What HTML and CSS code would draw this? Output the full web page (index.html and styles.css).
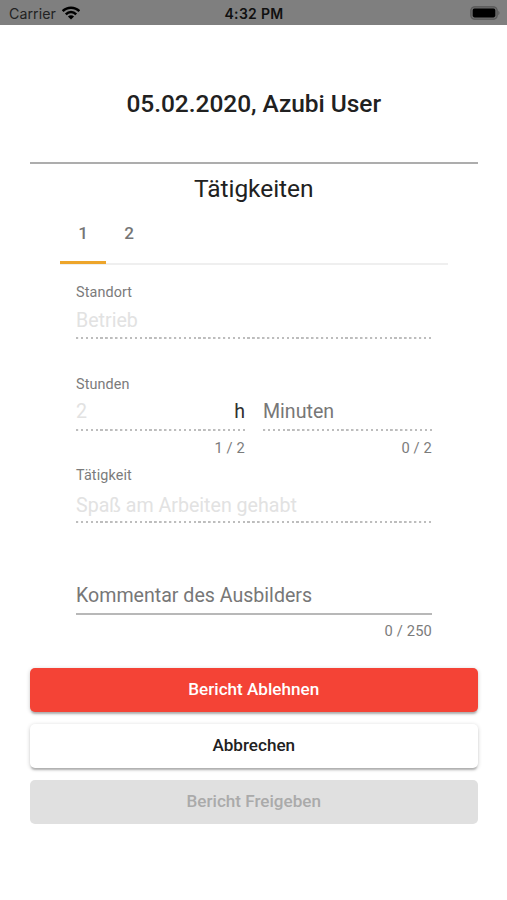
FILE: index.html
```html
<!DOCTYPE html>
<html lang="de">
<head>
<meta charset="utf-8">
<meta name="viewport" content="width=device-width, initial-scale=1">
<title>Bericht</title>
<link rel="stylesheet" href="styles.css">
</head>
<body>
<header class="status">
  <div class="carrier"><span>Carrier</span>
    <svg class="wifi" viewBox="0 0 18 14" width="18" height="14">
      <path d="M.7 5.1C5.2.5 12.8.5 17.3 5.1M3.8 8.3C6.8 5.3 11.2 5.3 14.2 8.3" fill="none" stroke="#000" stroke-width="2.5"/>
      <path d="M9 13.6 5.9 10.5Q9 8 12.1 10.5Z"/>
    </svg>
  </div>
  <div class="clock">4:32 PM</div>
  <svg class="battery" viewBox="0 0 31 14" width="31" height="14">
    <rect x=".8" y=".8" width="26.4" height="12.4" rx="3.8" fill="#6b6b6b" stroke="#555" stroke-width="1.1"/>
    <rect x="2.7" y="2.6" width="22.6" height="8.8" rx="1.8"/>
    <path d="M28.4 4.8q2.2 2.2 0 4.4z" fill="#555"/>
  </svg>
</header>
<main class="page">
  <h1 class="title">05.02.2020, Azubi User</h1>
  <hr class="rule">
  <h2 class="heading">Tätigkeiten</h2>
  <section class="card">
    <nav class="tabs">
      <span class="tab active">1</span>
      <span class="tab">2</span>
    </nav>
    <div class="form">
      <div class="field location">
        <label class="label">Standort</label>
        <div class="value disabled"><span>Betrieb</span></div>
        <div class="dots"></div>
      </div>
      <div class="row">
        <div class="field">
          <label class="label">Stunden</label>
          <div class="value disabled"><span>2</span><span class="suffix">h</span></div>
          <div class="dots"></div>
          <div class="count">1 / 2</div>
        </div>
        <div class="field">
          <span class="label"></span>
          <div class="value"><span>Minuten</span></div>
          <div class="dots"></div>
          <div class="count">0 / 2</div>
        </div>
      </div>
      <div class="field activity">
        <label class="label">Tätigkeit</label>
        <div class="value disabled"><span>Spaß am Arbeiten gehabt</span></div>
        <div class="dots"></div>
      </div>
      <div class="field comment">
        <div class="value"><span>Kommentar des Ausbilders</span></div>
        <div class="count">0 / 250</div>
      </div>
    </div>
  </section>
  <div class="actions">
    <button class="btn reject">Bericht Ablehnen</button>
    <button class="btn cancel">Abbrechen</button>
    <button class="btn approve" disabled>Bericht Freigeben</button>
  </div>
</main>
</body>
</html>
```
FILE: styles.css
```css
* { box-sizing: border-box; }
body {
  margin: 0;
  height: 900px;
  background: #fff;
  color: #212121;
  font-family: Roboto, "Liberation Sans", sans-serif;
  white-space: nowrap;
  overflow: hidden;
}
.status {
  display: grid;
  grid-template-columns: 1fr auto 1fr;
  align-items: center;
  height: 25px;
  padding: 2px 6px 0 9px;
  background: #7f7f7f;
  color: #101010;
  font: 14.2px/23px Inter, sans-serif;
}
.carrier { display: flex; align-items: center; gap: 6px; color: #222; letter-spacing: .05px; }
.wifi { margin-top: -2px; }
.clock { margin-right: 2px; font-weight: 600; font-size: 14px; letter-spacing: .3px; }
.battery { justify-self: end; margin-top: -1px; }
.page { padding: 0 29.5px 0 30px; }
.title {
  margin: 0;
  padding-top: 62px;
  height: 137px;
  font-size: 24.5px;
  line-height: 34px;
  font-weight: 500;
  letter-spacing: -.04px;
  text-align: center;
}
.rule { margin: 0; border: 0; height: 2px; background: #adadad; }
.heading {
  margin: 0;
  padding-top: 8px;
  height: 50px;
  font-size: 24.5px;
  line-height: 34px;
  font-weight: 400;
  letter-spacing: -.05px;
  text-align: center;
}
.card { padding: 0 29.5px 0 30px; }
.tabs { display: flex; height: 51px; border-bottom: 2px solid #efefef; }
.tab {
  width: 46px;
  height: 50px;
  padding-top: 9px;
  text-align: center;
  font-size: 17.1px;
  line-height: 20px;
  font-weight: 500;
  color: #757575;
}
.active { border-bottom: 3px solid #eda52b; }
.form { padding: 18px 16px 0; }
.label { display: block; height: 18px; padding-top: 1px; font-size: 14.4px; line-height: 18px; color: #7b7b7b; letter-spacing: .1px; }
.value { display: flex; justify-content: space-between; height: 36px; padding-top: 6px; font-size: 19.6px; line-height: 26px; color: #777; }
.disabled { color: #e2e2e2; }
.suffix { color: #303030; }
.dots { height: 2px; background: repeating-linear-gradient(90deg, #bdbdbd 0 2px, transparent 2.6px 4.9px); }
.count { height: 20px; padding-top: 7px; font-size: 14.7px; line-height: 20px; color: #7b7b7b; text-align: right; letter-spacing: .15px; }
.location { height: 92px; }
.location .value { padding-top: 7px; }
.row { display: grid; grid-template-columns: 169px 169px; justify-content: space-between; height: 91px; }
.activity .value { height: 37px; padding-top: 9px; }
.activity { height: 112px; }
.comment .value { height: 37px; padding-top: 5px; border-bottom: 2px solid #b8b8b8; }
.comment .count { padding-top: 6px; }
.actions { display: grid; gap: 12.2px; padding-top: 33px; }
.btn {
  height: 44px;
  padding: 0 0 2px;
  border: 0;
  border-radius: 5px;
  font: 500 17.1px/42px Roboto, sans-serif;
  box-shadow: 0 3px 2px -1px rgba(0,0,0,.22), 0 1px 4px rgba(0,0,0,.2);
}
.reject { background: #f44336; color: #fff; }
.cancel { background: #fff; color: #212121; }
.approve { background: #e0e0e0; color: #aaa; box-shadow: none; }
```
